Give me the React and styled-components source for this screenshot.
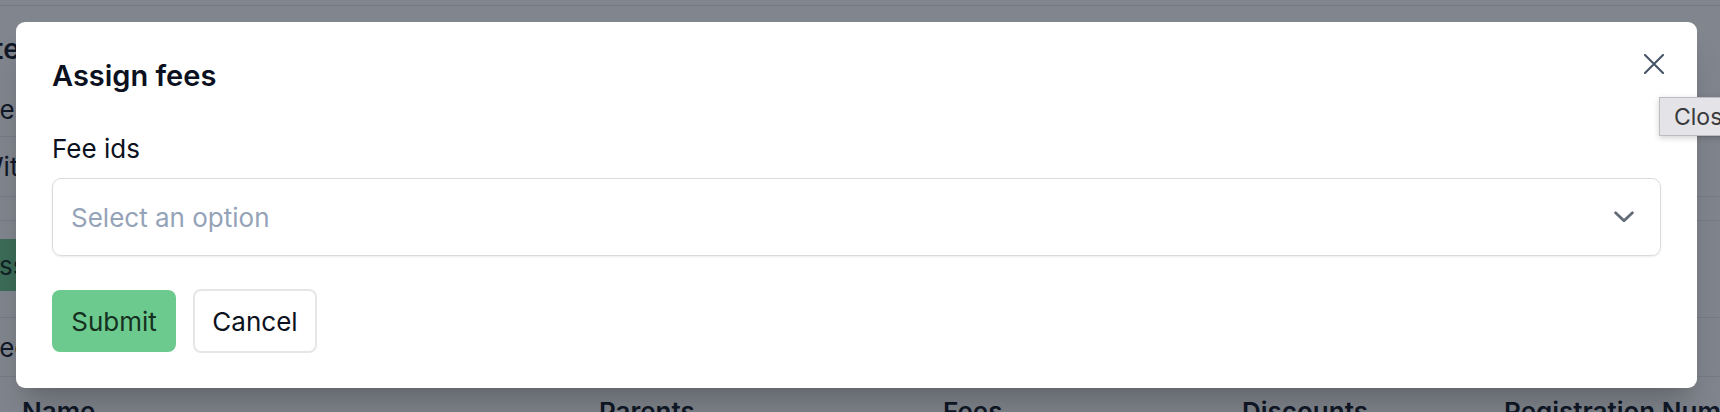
import React from "react";
import styled, { createGlobalStyle } from "styled-components";

const GlobalStyle = createGlobalStyle`
  html, body {
    margin: 0;
    padding: 0;
    background: #fff;
    overflow: hidden;
  }
  body {
    font-family: Inter, "Noto Sans", "Liberation Sans", sans-serif;
    -webkit-font-smoothing: antialiased;
  }
`;

const Screen = styled.div`
  position: relative;
  width: 1720px;
  height: 412px;
  overflow: hidden;
  background: #fff;
`;

/* the page underneath the dialog (scrolled a little to the right) */
const Page = styled.div`
  display: flex;
  flex-direction: column;
  color: #111827;
`;

const TopBar = styled.div`
  height: 5px;
  border-bottom: 1px solid #e5e7eb;
`;

const Line = styled.div`
  display: flex;
  align-items: center;
  height: ${props => props.$h}px;
  margin-left: ${props => props.$shift}px;
  font-size: ${props => props.$size || 26}px;
  font-weight: ${props => props.$weight || 400};
  white-space: nowrap;
  border-bottom: ${props => (props.$rule ? "1px solid #e5e7eb" : "none")};
`;

const Rule = styled.div`
  height: ${props => props.$h}px;
  border-bottom: 1px solid #e5e7eb;
`;

const ButtonRow = styled.div`
  display: flex;
  padding: 18px 0 26px;
  border-bottom: 1px solid #e5e7eb;
`;

const GreenButton = styled.div`
  display: flex;
  align-items: center;
  height: 52px;
  margin-left: ${props => props.$shift}px;
  padding: 0 24px;
  background: #6dca8f;
  border-radius: 6px;
  font-size: 26px;
  white-space: nowrap;
  color: #15301f;
`;

const TableHead = styled.div`
  display: grid;
  grid-template-columns: 577px 344px 299px 262px 1fr;
  padding: 19px 0 0 22px;
  font-size: 26px;
  font-weight: 600;
  white-space: nowrap;
`;

/* dialog */
const Overlay = styled.div`
  position: absolute;
  inset: 0;
  display: flex;
  align-items: flex-start;
  padding: 22px 23px 0 16px;
  background: rgba(17, 24, 39, 0.53);
`;

const Dialog = styled.div`
  position: relative;
  flex: 1;
  display: flex;
  flex-direction: column;
  padding: 36px 36px 35px 36px;
  background: #fff;
  border-radius: 9px;
  box-shadow: 0 30px 38px -8px rgba(0, 0, 0, 0.16),
    0 12px 15px -9px rgba(0, 0, 0, 0.12);
`;

const Title = styled.h2`
  margin: 0;
  font-size: 29px;
  line-height: 36px;
  font-weight: 600;
  color: #0b1120;
`;

const CloseButton = styled.button`
  position: absolute;
  top: 32px;
  right: 33px;
  display: flex;
  padding: 0;
  border: none;
  background: none;
  color: #475569;
  cursor: pointer;
`;

const Field = styled.div`
  display: flex;
  flex-direction: column;
  gap: 11px;
  margin-top: 37px;
`;

const Label = styled.label`
  font-size: 26px;
  line-height: 36px;
  color: #0b1120;
`;

const Select = styled.div`
  display: flex;
  align-items: center;
  justify-content: space-between;
  height: 78px;
  box-sizing: border-box;
  padding: 0 26px 0 18px;
  border: 1px solid #dadbdf;
  border-radius: 9px;
  box-shadow: 0 1px 2px rgba(0, 0, 0, 0.08);
  font-size: 26px;
  color: #94a3b8;
`;

const Actions = styled.div`
  display: flex;
  align-items: center;
  gap: 17px;
  margin-top: 33px;
`;

const Button = styled.button`
  box-sizing: border-box;
  width: 124px;
  height: ${props => (props.$primary ? 62 : 64)}px;
  padding: 0;
  border-radius: 8px;
  border: ${props => (props.$primary ? "none" : "2px solid #e6e6e8")};
  background: ${props => (props.$primary ? "#6dca8f" : "#fff")};
  color: ${props => (props.$primary ? "#15301f" : "#0b1120")};
  font-family: inherit;
  font-size: 26px;
  cursor: pointer;
`;

const Tooltip = styled.div`
  position: absolute;
  top: 97px;
  left: 1659px;
  height: 39px;
  box-sizing: border-box;
  display: flex;
  align-items: center;
  padding: 0 14px;
  background: #e4e4e8;
  border: 1px solid #bcbcc1;
  box-shadow: 0 2px 6px rgba(0, 0, 0, 0.18);
  font-size: 23px;
  color: #3a3a3c;
  white-space: nowrap;
`;

const CloseIcon = () => (
  <svg width="20" height="20" viewBox="0 0 20 20" fill="none">
    <path
      d="M1 1L19 19M19 1L1 19"
      stroke="currentColor"
      strokeWidth="2.1"
      strokeLinecap="round"
    />
  </svg>
);

const Chevron = () => (
  <svg width="20" height="12" viewBox="0 0 20 12" fill="none">
    <path
      d="M1.6 1.8L10 9.8L18.4 1.8"
      stroke="#646b78"
      strokeWidth="2.8"
      strokeLinecap="round"
      strokeLinejoin="round"
    />
  </svg>
);

const App = () => (
  <Screen>
    <GlobalStyle />
    <Page>
      <TopBar />
      <Line $h={86} $shift={-38} $size={28} $weight={600}>
        Filter fees
      </Line>
      <Line $h={34} $shift={-30}>
        Fee type
      </Line>
      <Rule $h={10} />
      <Line $h={59} $shift={-22} $rule>
        With discount
      </Line>
      <Rule $h={23} />
      <ButtonRow>
        <GreenButton $shift={-43}>Assign fees</GreenButton>
      </ButtonRow>
      <Line $h={58} $shift={-39} $rule>
        Selected
      </Line>
      <TableHead>
        <span>Name</span>
        <span>Parents</span>
        <span>Fees</span>
        <span>Discounts</span>
        <span>Registration Number</span>
      </TableHead>
    </Page>

    <Overlay>
      <Dialog role="dialog" aria-labelledby="assign-title">
        <Title id="assign-title">Assign fees</Title>
        <CloseButton aria-label="Close">
          <CloseIcon />
        </CloseButton>
        <Field>
          <Label>Fee ids</Label>
          <Select>
            <span>Select an option</span>
            <Chevron />
          </Select>
        </Field>
        <Actions>
          <Button $primary>Submit</Button>
          <Button>Cancel</Button>
        </Actions>
      </Dialog>
    </Overlay>
    <Tooltip>Close</Tooltip>
  </Screen>
);

export default App;
